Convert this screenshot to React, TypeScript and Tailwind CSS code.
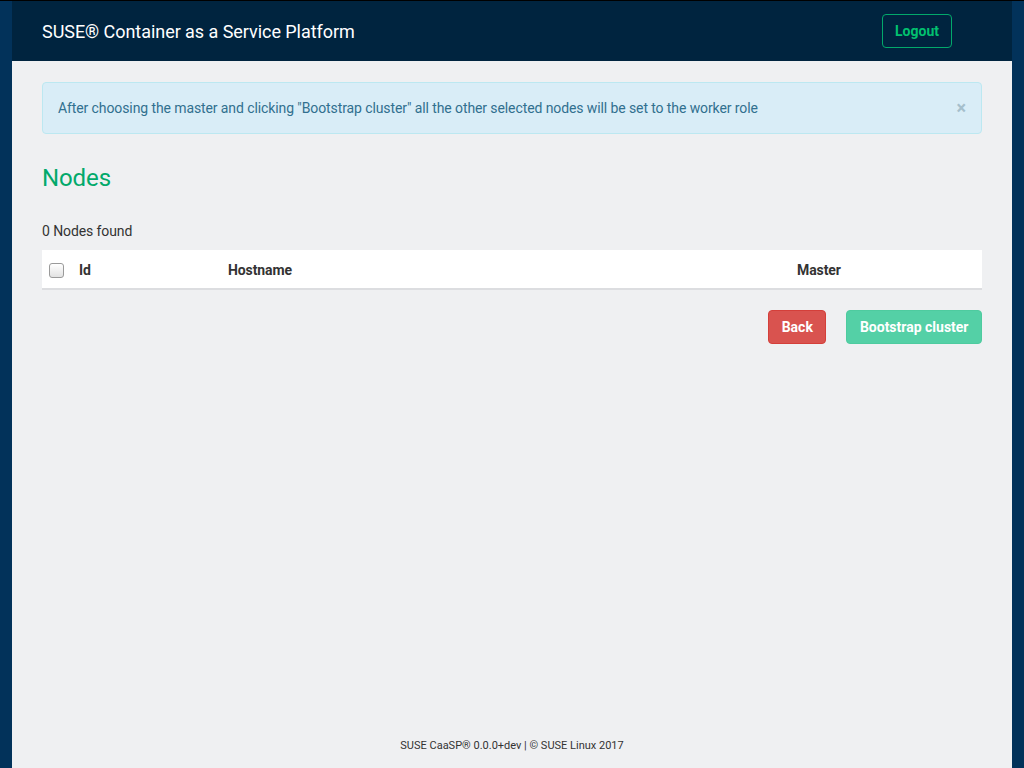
export default function App() {
  return (
    <div className="min-h-screen w-full bg-[#02325a] border-t border-black font-['Roboto',sans-serif] text-[14px] tracking-[-0.1px] text-[#333]">
      <div className="mx-[12px] min-h-[767px] flex flex-col bg-[#eff0f2]">
        {/* Header */}
        <header className="h-[60px] bg-[#00243f] flex items-center justify-between pl-[30px] pr-[60px]">
          <span className="text-white text-[18px] tracking-[-0.05px]">SUSE® Container as a Service Platform</span>
          <button className="h-[34px] px-[12px] border border-[#02a96b] rounded-[4px] text-[#02c170] font-bold text-[14px] tracking-normal">
            Logout
          </button>
        </header>

        <main className="flex-1 px-[30px] pt-[21px]">
          {/* Alert */}
          <div className="h-[52px] flex items-center justify-between bg-[#d9edf7] border border-[#bce8f1] rounded-[4px] pl-[15px] pr-[15px] text-[#31708f]">
            <span>After choosing the master and clicking "Bootstrap cluster" all the other selected nodes will be set to the worker role</span>
            <span className="text-[#a5bfcc] font-bold text-[18px] leading-none">×</span>
          </div>

          <h1 className="text-[#02a96b] text-[24px] mt-[29px] leading-[30px]">Nodes</h1>

          <p className="mt-[28px] leading-[20px]">0 Nodes found</p>

          {/* Table */}
          <div className="mt-[9px] bg-white border-b-2 border-[#dcdde0] h-[40px] pt-[2px] flex items-center font-bold">
            <div className="w-[37px] pl-[7px] flex items-center">
              <span className="w-[15px] h-[15px] rounded-[3px] border border-[#9a9a9a] bg-gradient-to-b from-white to-[#e2e2e2]"></span>
            </div>
            <div className="w-[149px]">Id</div>
            <div className="w-[569px]">Hostname</div>
            <div>Master</div>
          </div>

          <div className="mt-[20px] flex justify-end gap-[20px] tracking-normal">
            <button className="h-[34px] px-[12.5px] bg-[#d9534f] border border-[#d43f3a] rounded-[4px] text-white font-bold">
              Back
            </button>
            <button className="h-[34px] px-[12.5px] bg-[#54d0a6] border border-[#4ecb9f] rounded-[4px] text-white font-bold">
              Bootstrap cluster
            </button>
          </div>
        </main>

        <footer className="h-[30px] flex items-start justify-center text-[11px] tracking-normal text-[#333]">
          SUSE CaaSP® 0.0.0+dev | © SUSE Linux 2017
        </footer>
      </div>
    </div>
  );
}
